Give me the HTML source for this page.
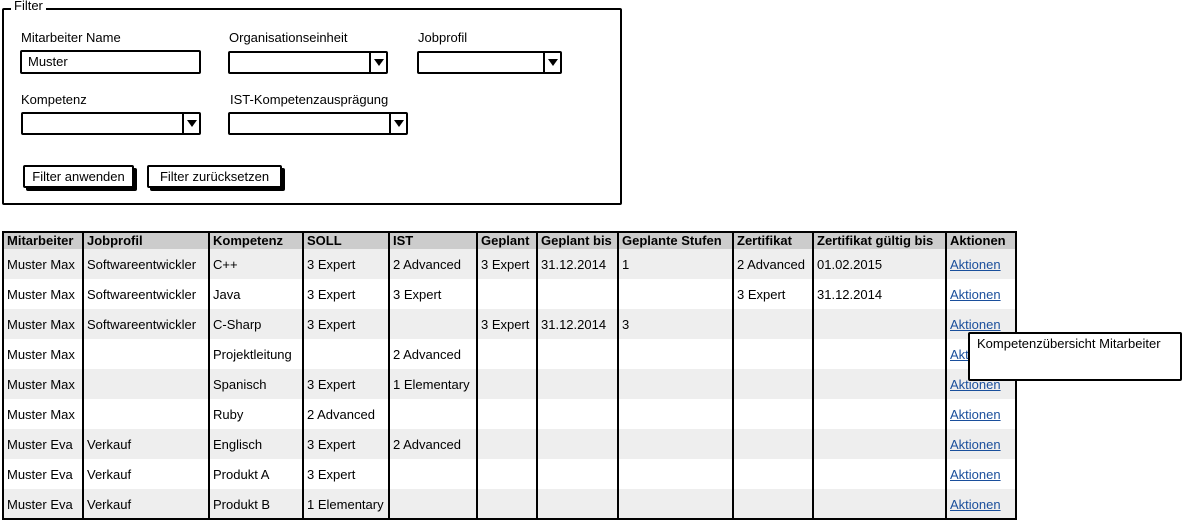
<!DOCTYPE html>
<html><head><meta charset="utf-8"><style>
*{margin:0;padding:0;box-sizing:border-box}
body{width:1185px;height:522px;background:#fff;position:relative;overflow:hidden;font-family:"Liberation Sans",sans-serif;font-size:13px;color:#000}
.a{position:absolute}
.box{border:2px solid #000;border-radius:2px}
.lbl{position:absolute;font-size:13px;white-space:nowrap}
.inp{position:absolute;border:2px solid #000;border-radius:2px;background:#fff;padding-left:6px;line-height:19px;font-size:13px}
.dd .arr{position:absolute;right:0;top:0;bottom:0;width:17px;border-left:2px solid #000}
.dd .arr:after{content:"";position:absolute;left:3px;top:6px;border-left:5px solid transparent;border-right:5px solid transparent;border-top:7px solid #000}
.btn{position:absolute;border:2px solid #000;border-radius:2px;background:#fff;box-shadow:3px 3px 0 #000;text-align:center;line-height:19px;font-size:13px}
table{position:absolute;left:2px;top:231px;border-collapse:collapse;table-layout:fixed;border:2px solid #000;width:1013px}
td,th{border-left:2px solid #000;border-right:2px solid #000;padding:0 0 0 3px;white-space:nowrap;overflow:hidden;text-align:left;font-size:13px}
th{background:#ccc;height:16px;font-weight:bold;line-height:16px}
td{height:30px;padding-top:1px}
tr:nth-child(even) td{background:#eee}
a{color:#1a4f9c;text-decoration:underline}
</style></head><body>
<div class="a box" style="left:2px;top:8px;width:620px;height:197px"></div>
<div class="lbl" style="left:11px;top:-2px;background:#fff;padding:0 3px">Filter</div>
<div class="lbl" style="left:21px;top:30px">Mitarbeiter Name</div>
<div class="inp" style="left:20px;top:50px;width:181px;height:24px">Muster</div>
<div class="lbl" style="left:229px;top:30px">Organisationseinheit</div>
<div class="inp dd" style="left:228px;top:51px;width:160px;height:23px"><div class="arr"></div></div>
<div class="lbl" style="left:418px;top:30px">Jobprofil</div>
<div class="inp dd" style="left:417px;top:51px;width:145px;height:23px"><div class="arr"></div></div>
<div class="lbl" style="left:21px;top:92px">Kompetenz</div>
<div class="inp dd" style="left:21px;top:112px;width:180px;height:23px"><div class="arr"></div></div>
<div class="lbl" style="left:230px;top:92px">IST-Kompetenzausprägung</div>
<div class="inp dd" style="left:228px;top:112px;width:180px;height:23px"><div class="arr"></div></div>
<div class="btn" style="left:23px;top:165px;width:111px;height:23px">Filter anwenden</div>
<div class="btn" style="left:147px;top:165px;width:135px;height:23px">Filter zurücksetzen</div>
<table>
<colgroup><col style="width:80px"><col style="width:126px"><col style="width:94px"><col style="width:86px"><col style="width:88px"><col style="width:60px"><col style="width:81px"><col style="width:115px"><col style="width:80px"><col style="width:133px"><col style="width:70px"></colgroup>
<tr><th>Mitarbeiter</th><th>Jobprofil</th><th>Kompetenz</th><th>SOLL</th><th>IST</th><th>Geplant</th><th>Geplant bis</th><th>Geplante Stufen</th><th>Zertifikat</th><th>Zertifikat gültig bis</th><th>Aktionen</th></tr>
<tr><td>Muster Max</td><td>Softwareentwickler</td><td>C++</td><td>3 Expert</td><td>2 Advanced</td><td>3 Expert</td><td>31.12.2014</td><td>1</td><td>2 Advanced</td><td>01.02.2015</td><td><a>Aktionen</a></td></tr>
<tr><td>Muster Max</td><td>Softwareentwickler</td><td>Java</td><td>3 Expert</td><td>3 Expert</td><td></td><td></td><td></td><td>3 Expert</td><td>31.12.2014</td><td><a>Aktionen</a></td></tr>
<tr><td>Muster Max</td><td>Softwareentwickler</td><td>C-Sharp</td><td>3 Expert</td><td></td><td>3 Expert</td><td>31.12.2014</td><td>3</td><td></td><td></td><td><a>Aktionen</a></td></tr>
<tr><td>Muster Max</td><td></td><td>Projektleitung</td><td></td><td>2 Advanced</td><td></td><td></td><td></td><td></td><td></td><td><a>Aktionen</a></td></tr>
<tr><td>Muster Max</td><td></td><td>Spanisch</td><td>3 Expert</td><td>1 Elementary</td><td></td><td></td><td></td><td></td><td></td><td><a>Aktionen</a></td></tr>
<tr><td>Muster Max</td><td></td><td>Ruby</td><td>2 Advanced</td><td></td><td></td><td></td><td></td><td></td><td></td><td><a>Aktionen</a></td></tr>
<tr><td>Muster Eva</td><td>Verkauf</td><td>Englisch</td><td>3 Expert</td><td>2 Advanced</td><td></td><td></td><td></td><td></td><td></td><td><a>Aktionen</a></td></tr>
<tr><td>Muster Eva</td><td>Verkauf</td><td>Produkt A</td><td>3 Expert</td><td></td><td></td><td></td><td></td><td></td><td></td><td><a>Aktionen</a></td></tr>
<tr><td>Muster Eva</td><td>Verkauf</td><td>Produkt B</td><td>1 Elementary</td><td></td><td></td><td></td><td></td><td></td><td></td><td><a>Aktionen</a></td></tr>
</table>
<div class="a box" style="left:968px;top:332px;width:214px;height:49px;background:#fff;padding:2px 0 0 7px;font-size:13px;white-space:nowrap">Kompetenzübersicht Mitarbeiter</div>
</body></html>
